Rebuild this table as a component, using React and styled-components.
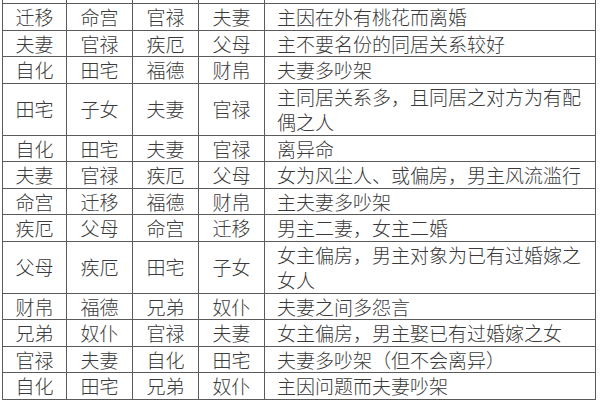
import styled, { createGlobalStyle } from 'styled-components';

const Global = createGlobalStyle`
    html, body{
        margin: 0;
        padding: 0;
        background: #fff;
    }
`

const Page = styled.div`
    width: 600px;
    height: 400px;
    overflow: hidden;
    background: #fff;
`

const Table = styled.table`
    border-collapse: collapse;
    table-layout: fixed;
    width: 594px;
    margin: -23.5px 0 0 2px;
    color: #3a3a3a;
    font-family: "Noto Sans CJK SC", "Noto Sans", sans-serif;
    font-size: 19px;
    font-weight: 300;
    line-height: 25.5px;
`

const Col = styled.col`
    width: ${p => p.$w ? `${p.$w}px` : 'auto'};
`

const Cell = styled.td`
    border: 1px solid #5a5a5a;
    padding: 0;
    height: 25.5px;
    text-align: center;
    vertical-align: middle;
    white-space: nowrap;
`

const Desc = styled(Cell)`
    text-align: left;
    padding: 0 8px 0 12px;
    white-space: normal;
    word-break: break-all;
`

const rows = [
    ['', '', '', '', ''],
    ['迁移', '命宫', '官禄', '夫妻', '主因在外有桃花而离婚'],
    ['夫妻', '官禄', '疾厄', '父母', '主不要名份的同居关系较好'],
    ['自化', '田宅', '福德', '财帛', '夫妻多吵架'],
    ['田宅', '子女', '夫妻', '官禄', '主同居关系多，且同居之对方为有配偶之人'],
    ['自化', '田宅', '夫妻', '官禄', '离异命'],
    ['夫妻', '官禄', '疾厄', '父母', '女为风尘人、或偏房，男主风流滥行'],
    ['命宫', '迁移', '福德', '财帛', '主夫妻多吵架'],
    ['疾厄', '父母', '命宫', '迁移', '男主二妻，女主二婚'],
    ['父母', '疾厄', '田宅', '子女', '女主偏房，男主对象为已有过婚嫁之女人'],
    ['财帛', '福德', '兄弟', '奴仆', '夫妻之间多怨言'],
    ['兄弟', '奴仆', '官禄', '夫妻', '女主偏房，男主娶已有过婚嫁之女'],
    ['官禄', '夫妻', '自化', '田宅', '夫妻多吵架（但不会离异）'],
    ['自化', '田宅', '兄弟', '奴仆', '主因问题而夫妻吵架'],
    ['', '', '', '', ''],
]

export default function App(){
    return(
        <Page>
            <Global />
            <Table>
                <colgroup>
                    <Col $w={64} />
                    <Col $w={66} />
                    <Col $w={66} />
                    <Col $w={66} />
                    <Col />
                </colgroup>
                <tbody>
                    {rows.map((r, i) => (
                        <tr key={i}>
                            <Cell>{r[0]}</Cell>
                            <Cell>{r[1]}</Cell>
                            <Cell>{r[2]}</Cell>
                            <Cell>{r[3]}</Cell>
                            <Desc>{r[4]}</Desc>
                        </tr>
                    ))}
                </tbody>
            </Table>
        </Page>
    );
}
